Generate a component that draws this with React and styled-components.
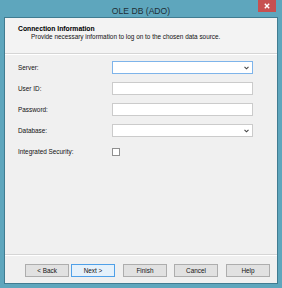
import React from "react";
import styled, { createGlobalStyle } from "styled-components";

const Global = createGlobalStyle`
  html, body { margin: 0; padding: 0; overflow: hidden; background: #5ea6bd; }
  * { box-sizing: border-box; }
`;

const Window = styled.div`
  width: 282px;
  height: 288px;
  background: #5ea6bd;
  display: flex;
  flex-direction: column;
  padding: 0 5px 5px 5px;
  font-family: "Liberation Sans", Arial, sans-serif;
  color: #000;
`;

const TitleBar = styled.div`
  height: 18px;
  display: grid;
  grid-template-columns: 1fr auto 1fr;
  align-items: start;
`;

const Title = styled.div`
  grid-column: 2;
  font-size: 8.6px;
  line-height: 10px;
  padding-top: 6px;
  color: #1f2f36;
  white-space: nowrap;
`;

const CloseButton = styled.div`
  grid-column: 3;
  justify-self: end;
  margin-right: 1px;
  width: 18px;
  height: 12px;
  background: #c75050;
  display: flex;
  align-items: center;
  justify-content: center;
`;

const Content = styled.div`
  flex: 1;
  background: #f0f0f0;
  display: flex;
  flex-direction: column;
  box-shadow: 0 0 0 1px rgba(40, 90, 110, 0.55);
`;

const Header = styled.div`
  height: 35px;
  padding: 7px 0 0 13px;
  background: #f3f3f3;
`;

const HeaderTitle = styled.div`
  font-weight: bold;
  font-size: 6.8px;
  line-height: 8px;
  white-space: nowrap;
`;

const HeaderSub = styled.div`
  font-size: 6.4px;
  line-height: 8px;
  padding-left: 13px;
  white-space: nowrap;
  color: #111;
`;

const Separator = styled.div`
  height: 2px;
  border-top: 1px solid #d5d5d5;
  border-bottom: 1px solid #ffffff;
`;

const Form = styled.div`
  flex: 1;
  padding: 6px 0 0 13px;
  display: flex;
  flex-direction: column;
  gap: 8px;
`;

const Row = styled.div`
  display: grid;
  grid-template-columns: 94px 141px;
  align-items: center;
  height: 13px;
`;

const Label = styled.div`
  font-size: 6.4px;
  line-height: 8px;
  color: #111;
  white-space: nowrap;
`;

const Field = styled.div`
  height: ${(p) => (p.$short ? 12 : 13)}px;
  background: #fff;
  border: 1px solid ${(p) => (p.$focused ? "#7eb4ea" : "#cbcbcb")};
  display: flex;
  align-items: center;
  justify-content: flex-end;
  padding-right: 3px;
`;

const Checkbox = styled.div`
  width: 8px;
  height: 8px;
  border: 1px solid #8f8f8f;
  background: #fff;
`;

const ButtonBar = styled.div`
  display: flex;
  align-items: center;
  padding: 8px 0 6px 20px;
  gap: 8px;
`;

const ButtonGroup = styled.div`
  display: flex;
  gap: 2px;
`;

const Button = styled.div`
  width: 44px;
  height: 13px;
  border: 1px solid ${(p) => (p.$default ? "#4fa0e8" : "#adadad")};
  background: ${(p) => (p.$default ? "#e5f1fb" : "#e1e1e1")};
  font-size: 6.4px;
  line-height: 11px;
  text-align: center;
  color: #111;
  white-space: nowrap;
  margin-left: ${(p) => p.$ml || 0}px;
`;

const Chevron = () => (
  <svg width="5" height="4" viewBox="0 0 5 4">
    <path d="M0.5 0.8 L2.5 2.8 L4.5 0.8" stroke="#444" strokeWidth="1.1" fill="none" />
  </svg>
);

export default function App() {
  return (
    <>
      <Global />
      <Window>
        <TitleBar>
          <Title>OLE DB (ADO)</Title>
          <CloseButton>
            <svg width="6" height="6" viewBox="0 0 6 6">
              <path d="M0.8 0.8 L5.2 5.2 M5.2 0.8 L0.8 5.2" stroke="#fff" strokeWidth="1.4" />
            </svg>
          </CloseButton>
        </TitleBar>
        <Content>
          <Header>
            <HeaderTitle>Connection Information</HeaderTitle>
            <HeaderSub>Provide necessary information to log on to the chosen data source.</HeaderSub>
          </Header>
          <Separator />
          <Form>
            <Row>
              <Label>Server:</Label>
              <Field $focused><Chevron /></Field>
            </Row>
            <Row>
              <Label>User ID:</Label>
              <Field />
            </Row>
            <Row>
              <Label>Password:</Label>
              <Field />
            </Row>
            <Row>
              <Label>Database:</Label>
              <Field><Chevron /></Field>
            </Row>
            <Row>
              <Label>Integrated Security:</Label>
              <Checkbox />
            </Row>
          </Form>
          <Separator />
          <ButtonBar>
            <ButtonGroup>
              <Button>&lt; Back</Button>
              <Button $default>Next &gt;</Button>
            </ButtonGroup>
            <Button>Finish</Button>
            <Button $ml={-1}>Cancel</Button>
            <Button>Help</Button>
          </ButtonBar>
        </Content>
      </Window>
    </>
  );
}
